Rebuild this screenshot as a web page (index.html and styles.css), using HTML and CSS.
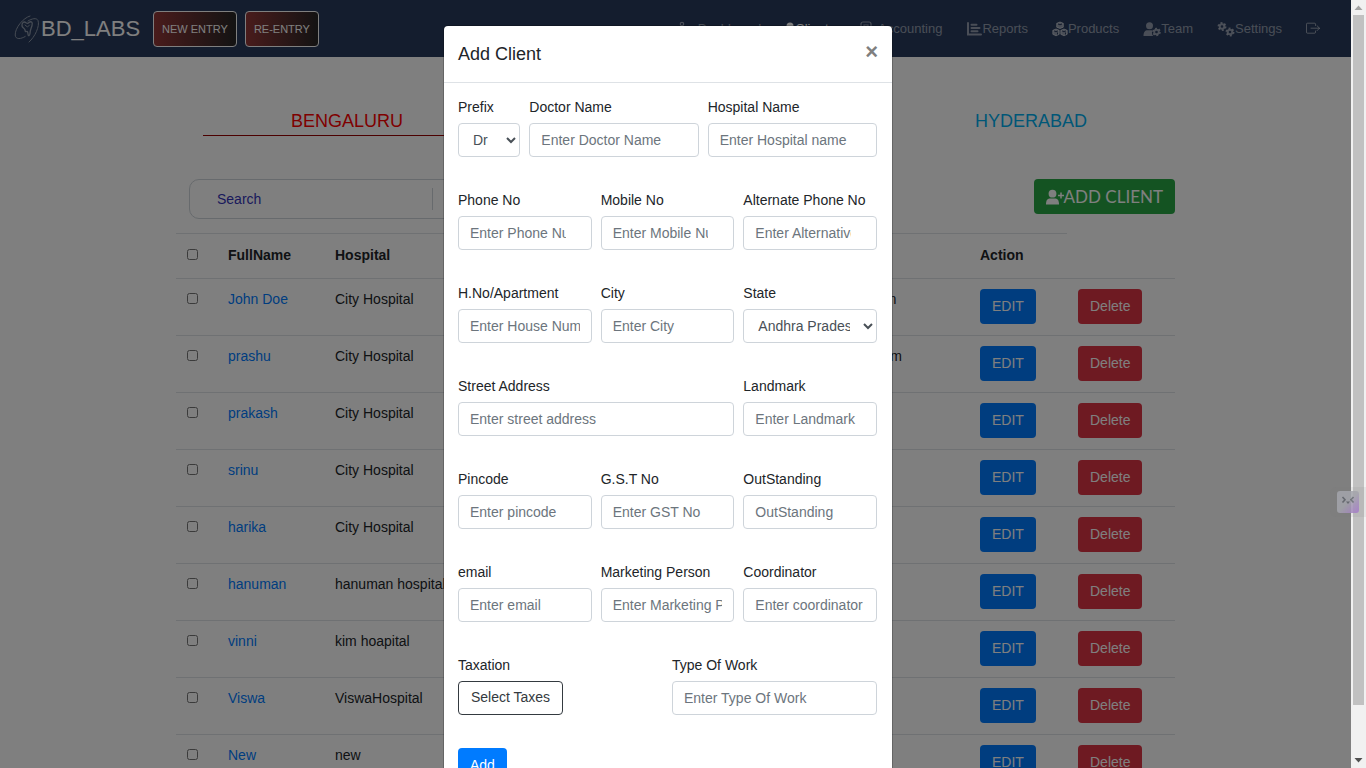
FILE: index.html
```html
<!DOCTYPE html>
<html lang="en">
<head>
<meta charset="utf-8">
<title>BD_LABS - Clients</title>
<link rel="stylesheet" href="styles.css">
</head>
<body>
<div class="screen">
  <div class="page">
    <nav class="navbar">
      <a class="brand" href="#">
        <svg class="brand-logo" viewBox="0 0 26 30" fill="none" stroke="#8c97a8" stroke-linecap="round" stroke-linejoin="round"><path d="M16 2C9 4 1 14 1.200 21c.3 5 6 4 10 1.500M15 28C21 23 26 12 24 6.500 22.500 3.500 18 4.500 14 7" stroke-width="1"/><path d="M8 12c-.5-3.500 2-5 4-3.200 1.200.8 2 .8 3-.3 2-1.600 4-.5 3 3-.6 2.500-1.800 4-2 8-.3 2.500-1.800 3-2 .5-.3-2.500-.7-3-1.500-2.500-1 .5-1.200 0-1.500-1.500-.5-2-2.600-2-3-4Z" stroke-width="1.300"/><path d="M11 11l2.500 2 2-2" stroke-width="1"/></svg>
        <span>BD_LABS</span>
      </a>
      <button class="entry-btn" type="button">NEW ENTRY</button>
      <button class="entry-btn" type="button">RE-ENTRY</button>
      <div class="nav-links">
        <a class="nav-link spaced" href="#"><svg class="ic" viewBox="0 0 16 16" fill="none" stroke="currentColor" stroke-width="1.200"><circle cx="3" cy="3" r="1.700"/><path d="M3 5v8h10M3 7h10"/></svg><span>Dashboard</span></a>
        <a class="nav-link active" href="#"><svg class="ic slim" viewBox="0 0 10 16" fill="currentColor"><circle cx="5" cy="5" r="3.500"/><path d="M0 15c0-4 2-5.500 5-5.500s5 1.500 5 5.500Z"/></svg><span>Clients</span></a>
        <a class="nav-link spaced" href="#"><svg class="ic" viewBox="0 0 16 16" fill="none" stroke="currentColor" stroke-width="1.200"><rect x="2" y="1" width="10" height="13" rx="2"/><path d="M5 4h4v3.500H5zM4 10.500h6"/></svg><span>Accounting</span></a>
        <a class="nav-link" href="#"><svg class="ic" viewBox="0 0 16 16" fill="none" stroke="currentColor" stroke-width="2" stroke-linecap="round"><path d="M2 2v11.500h13M5.500 3.800h5M5.500 7h8M5.500 10.200h6"/></svg><span>Reports</span></a>
        <a class="nav-link" href="#"><svg class="ic" viewBox="0 0 16 16" fill="currentColor" stroke="currentColor" stroke-width="1" stroke-linejoin="round"><path d="M8 1 11.300 2.300v3.900L8 7.500 4.700 6.200V2.300ZM4 8l3.200 1.300v4L4 14.800.8 13.300v-4ZM12 8l3.200 1.300v4L12 14.800l-3.200-1.500v-4Z"/><path d="M6 3 8 3.800 10 3M2.200 10 4 10.800 5.800 10M10.200 10l1.800.8 1.800-.8M5.500 11.500v2M13.500 11.500v2" fill="none" stroke="#283a5c" stroke-width="1"/></svg><span>Products</span></a>
        <a class="nav-link" href="#"><svg class="ic wide" viewBox="0 0 17 16" fill="currentColor"><circle cx="6" cy="4.800" r="3.500"/><path d="M0 15c0-4 1.500-5.800 4-5.800h3.500c1 0 1.300.3 1.300.8-.8 2-.2 4 1 5Z"/><circle cx="13" cy="11" r="2.300" fill="none" stroke="currentColor" stroke-width="1.900"/><circle cx="13" cy="11" r="3.700" fill="none" stroke="currentColor" stroke-width="1.200" stroke-dasharray="1.940"/></svg><span>Team</span></a>
        <a class="nav-link" href="#"><svg class="ic wide" viewBox="0 0 17 16" fill="none" stroke="currentColor"><circle cx="4.500" cy="5.500" r="2.300" stroke-width="2"/><circle cx="4.500" cy="5.500" r="3.800" stroke-width="1.400" stroke-dasharray="1.990"/><circle cx="12.500" cy="11" r="2.300" stroke-width="2"/><circle cx="12.500" cy="11" r="3.800" stroke-width="1.400" stroke-dasharray="1.990"/></svg><span>Settings</span></a>
        <a class="nav-link" href="#" aria-label="Log out"><svg class="ic out" viewBox="0 0 14 14" fill="none" stroke="currentColor" stroke-linecap="round" stroke-linejoin="round"><path d="M9.500 3.500V2.200c0-.7-.3-1-1-1h-7c-.7 0-1 .3-1 1v8c0 .7.300 1 1 1h7c.7 0 1-.3 1-1V9M5 6.200h8.500M11 3.700l2.500 2.500L11 8.700"/></svg></a>
      </div>
    </nav>

    <main class="container">
      <div class="tabs">
        <a class="tab selected" href="#">BENGALURU</a>
        <a class="tab" href="#">HYDERABAD</a>
      </div>
      <div class="toolbar">
        <div class="search">
          <input class="search-input" type="text" placeholder="Search" aria-label="Search">
        </div>
        <button class="add-client" type="button"><svg class="plus-ic" viewBox="0 0 18 16" fill="currentColor"><circle cx="6.500" cy="4.700" r="3.900"/><path d="M0 15.500C0 11 1.500 9.500 4.500 9.500h4c3 0 4.500 1.500 4.500 6Z"/><path d="M12 6.500h6M15 3.500v6" stroke="currentColor" stroke-width="1.500"/></svg><span>ADD CLIENT</span></button>
      </div>

      <table class="clients">
        <colgroup><col class="c-check"><col class="c-name"><col class="c-hospital"><col class="c-email"><col class="c-edit"><col class="c-delete"></colgroup>
        <thead>
          <tr><th><input class="tick" type="checkbox" aria-label="Select all"></th><th>FullName</th><th>Hospital</th><th></th><th>Action</th></tr>
        </thead>
        <tbody>
          <tr><td><input class="tick" type="checkbox" aria-label="Select John Doe"></td><td><a href="#">John Doe</a></td><td>City Hospital</td><td>john.k@gmail.com</td><td><button class="btn edit" type="button">EDIT</button></td><td><button class="btn delete" type="button">Delete</button></td></tr>
          <tr><td><input class="tick" type="checkbox" aria-label="Select prashu"></td><td><a href="#">prashu</a></td><td>City Hospital</td><td>prashu@gmail.com</td><td><button class="btn edit" type="button">EDIT</button></td><td><button class="btn delete" type="button">Delete</button></td></tr>
          <tr><td><input class="tick" type="checkbox" aria-label="Select prakash"></td><td><a href="#">prakash</a></td><td>City Hospital</td><td></td><td><button class="btn edit" type="button">EDIT</button></td><td><button class="btn delete" type="button">Delete</button></td></tr>
          <tr><td><input class="tick" type="checkbox" aria-label="Select srinu"></td><td><a href="#">srinu</a></td><td>City Hospital</td><td></td><td><button class="btn edit" type="button">EDIT</button></td><td><button class="btn delete" type="button">Delete</button></td></tr>
          <tr><td><input class="tick" type="checkbox" aria-label="Select harika"></td><td><a href="#">harika</a></td><td>City Hospital</td><td></td><td><button class="btn edit" type="button">EDIT</button></td><td><button class="btn delete" type="button">Delete</button></td></tr>
          <tr><td><input class="tick" type="checkbox" aria-label="Select hanuman"></td><td><a href="#">hanuman</a></td><td>hanuman hospital</td><td></td><td><button class="btn edit" type="button">EDIT</button></td><td><button class="btn delete" type="button">Delete</button></td></tr>
          <tr><td><input class="tick" type="checkbox" aria-label="Select vinni"></td><td><a href="#">vinni</a></td><td>kim hoapital</td><td></td><td><button class="btn edit" type="button">EDIT</button></td><td><button class="btn delete" type="button">Delete</button></td></tr>
          <tr><td><input class="tick" type="checkbox" aria-label="Select Viswa"></td><td><a href="#">Viswa</a></td><td>ViswaHospital</td><td></td><td><button class="btn edit" type="button">EDIT</button></td><td><button class="btn delete" type="button">Delete</button></td></tr>
          <tr><td><input class="tick" type="checkbox" aria-label="Select New"></td><td><a href="#">New</a></td><td>new</td><td></td><td><button class="btn edit" type="button">EDIT</button></td><td><button class="btn delete" type="button">Delete</button></td></tr>
        </tbody>
      </table>
    </main>
  </div>

  <div class="overlay">
    <div class="modal" role="dialog" aria-labelledby="modal-title">
      <div class="modal-header">
        <h5 class="modal-title" id="modal-title">Add Client</h5>
        <button class="close" type="button" aria-label="Close">×</button>
      </div>
      <form class="modal-body">
        <div class="field span-2"><label for="prefix">Prefix</label><select class="control" id="prefix"><option>Dr</option></select></div>
        <div class="field span-5"><label for="doctor">Doctor Name</label><input class="control" id="doctor" type="text" placeholder="Enter Doctor Name"></div>
        <div class="field span-5"><label for="hospital">Hospital Name</label><input class="control" id="hospital" type="text" placeholder="Enter Hospital name"></div>

        <div class="field span-4"><label for="phone">Phone No</label><input class="control spin" id="phone" type="text" placeholder="Enter Phone Number"></div>
        <div class="field span-4"><label for="mobile">Mobile No</label><input class="control spin" id="mobile" type="text" placeholder="Enter Mobile Number"></div>
        <div class="field span-4"><label for="alt-phone">Alternate Phone No</label><input class="control spin" id="alt-phone" type="text" placeholder="Enter Alternative Number"></div>

        <div class="field span-4"><label for="house">H.No/Apartment</label><input class="control" id="house" type="text" placeholder="Enter House Number"></div>
        <div class="field span-4"><label for="city">City</label><input class="control" id="city" type="text" placeholder="Enter City"></div>
        <div class="field span-4"><label for="state">State</label><select class="control" id="state"><option>Andhra Pradesh</option></select></div>

        <div class="field span-8"><label for="street">Street Address</label><input class="control" id="street" type="text" placeholder="Enter street address"></div>
        <div class="field span-4"><label for="landmark">Landmark</label><input class="control" id="landmark" type="text" placeholder="Enter Landmark"></div>

        <div class="field span-4"><label for="pincode">Pincode</label><input class="control" id="pincode" type="text" placeholder="Enter pincode"></div>
        <div class="field span-4"><label for="gst">G.S.T No</label><input class="control" id="gst" type="text" placeholder="Enter GST No"></div>
        <div class="field span-4"><label for="outstanding">OutStanding</label><input class="control" id="outstanding" type="text" placeholder="OutStanding"></div>

        <div class="field span-4"><label for="email">email</label><input class="control" id="email" type="email" placeholder="Enter email"></div>
        <div class="field span-4"><label for="marketing">Marketing Person</label><input class="control" id="marketing" type="text" placeholder="Enter Marketing Person"></div>
        <div class="field span-4"><label for="coordinator">Coordinator</label><input class="control" id="coordinator" type="text" placeholder="Enter coordinator"></div>

        <div class="field span-6"><label for="taxes">Taxation</label><button class="btn outline" id="taxes" type="button">Select Taxes</button></div>
        <div class="field span-6"><label for="work">Type Of Work</label><input class="control" id="work" type="text" placeholder="Enter Type Of Work"></div>

        <div class="actions"><button class="btn edit" type="submit">Add</button></div>
      </form>
    </div>
  </div>
</div>

<div class="scrollbar" aria-hidden="true">
  <svg class="arrow" viewBox="0 0 15 15" fill="#a3a3a3"><path d="M7.500 5.500 11.500 10h-8Z"/></svg>
  <div class="track"><div class="thumb"></div></div>
  <svg class="arrow" viewBox="0 0 15 15" fill="#505050"><path d="M7.500 9.500 3.500 5h8Z"/></svg>
</div>

<div class="widget" aria-hidden="true">
  <svg class="widget-face" viewBox="0 0 22 22"><defs><linearGradient id="face" x1="0" y1="0" x2="1" y2="1"><stop offset=".5" stop-color="#a4a5ac"/><stop offset="1" stop-color="#a678cc"/></linearGradient></defs><rect width="22" height="22" rx="3" fill="url(#face)"/><path d="M5.500 6 8 8.700 5.500 11.500M16.500 6 14 8.700l2.500 2.800" fill="none" stroke="#62666e" stroke-width="1.600"/><path d="M9 10.500h4L11 13Z" fill="#62666e"/></svg>
</div>
</body>
</html>
```
FILE: styles.css
```css
* { box-sizing: border-box; }

body {
  margin: 0;
  height: 100vh;
  display: flex;
  position: relative;
  overflow: hidden;
  font-family: "Liberation Sans", Arial, sans-serif;
  font-size: 14px;
  line-height: 20px;
  color: #212529;
  background: #fff;
}

button, input, select { font: inherit; }
button { cursor: pointer; }
a { color: #007bff; text-decoration: none; }

.screen { flex: 1; position: relative; overflow: hidden; }

/* top bar */
.navbar {
  display: flex;
  align-items: center;
  height: 57px;
  padding: 0 31px 0 14px;
  background: #283a5c;
}
.brand {
  display: flex;
  align-items: center;
  gap: 1px;
  margin-right: 13px;
  color: #fff;
  font-size: 22px;
}
.brand-logo { width: 26px; height: 30px; }
.entry-btn {
  height: 36px;
  margin-right: 8px;
  padding: 0 8px;
  border: 1px solid #fff;
  border-radius: 4px;
  color: #fff;
  font-size: 11px;
  background: linear-gradient(to right, #933838, #262626);
}
.nav-links { display: flex; gap: 24px; margin-left: auto; }
.nav-link {
  display: flex;
  align-items: center;
  color: rgba(255, 255, 255, .5);
  font-size: 13px;
}
.nav-link.active { color: #fff; }
.spaced { gap: 3px; }
.ic { width: 16px; height: 16px; }
.ic.slim { width: 10px; }
.ic.wide { width: 18px; }
.ic.out { width: 14px; height: 14px; }

/* page content */
.container { max-width: 999px; margin: 0 auto; padding-top: 50px; }
.tabs {
  display: flex;
  justify-content: space-between;
  margin-left: 27px;
}
.tab {
  width: 288px;
  height: 29px;
  border-bottom: 1px solid transparent;
  color: #00aeef;
  font-size: 18px;
  line-height: 28px;
  text-align: center;
}
.tab.selected { color: #f00; border-color: #900; }

.toolbar {
  display: flex;
  justify-content: space-between;
  align-items: flex-start;
  margin: 43px 0 14px 13px;
}
.search {
  display: flex;
  align-items: center;
  width: 480px;
  height: 40px;
  padding-left: 27px;
  border: 1px solid #ced4da;
  border-radius: 10px;
}
.search-input {
  width: 216px;
  height: 22px;
  padding: 0;
  border: 0;
  border-right: 1px solid #ced4da;
  background: none;
}
.search-input::placeholder { color: #3434b8; }
.add-client {
  display: flex;
  align-items: center;
  height: 35px;
  padding: 0 12px;
  border: 0;
  border-radius: 4px;
  color: #fff;
  background: #28a745;
  font-family: Lato, sans-serif;
  font-size: 17px;
  font-weight: 400;
}
.plus-ic { width: 18px; height: 16px; }

.clients { width: 100%; table-layout: fixed; border-collapse: separate; border-spacing: 0; }
.clients th, .clients td {
  padding: 10px 11px 11px;
  border-top: 1px solid #dee2e6;
  text-align: left;
  vertical-align: top;
  white-space: nowrap;
}
.clients th { padding: 11px 11px 13px; }
.c-check { width: 41px; }
.c-name { width: 107px; }
.c-hospital { width: 446px; }
.c-email { width: 199px; }
.c-edit { width: 98px; }
.tick { display: block; width: 11px; height: 11px; margin: 4px 0 0; }

.btn {
  display: block;
  height: 35px;
  padding: 0 11px 2px;
  border: 1px solid transparent;
  border-radius: 4px;
  color: #fff;
}
.btn.edit { background: #007bff; }
.btn.delete { background: #dc3545; }
.btn.outline { height: 34px; padding: 0 12px 2px; border-color: #343a40; color: #343a40; background: #fff; }

/* dialog */
.overlay {
  position: absolute;
  inset: 0;
  padding: 26px 15px 0 0;
  overflow: hidden;
  background: rgba(0, 0, 0, .5);
}
.modal {
  max-width: 448px;
  margin: 0 auto;
  border-radius: 4px;
  background: #fff;
  box-shadow: 0 0 0 1px rgba(0, 0, 0, .2);
}
.modal-header {
  display: flex;
  justify-content: space-between;
  align-items: flex-start;
  height: 57px;
  padding: 14px;
  border-bottom: 1px solid #dee2e6;
}
.modal-title { margin: 0; font-size: 18px; font-weight: 400; line-height: 28px; }
.close {
  padding: 0;
  border: 0;
  color: #7f7f7f;
  background: none;
  font-size: 22px;
  font-weight: 700;
  line-height: 24px;
}
.modal-body {
  display: grid;
  grid-template-columns: repeat(12, 1fr);
  gap: 33px 9px;
  padding: 14px 15px 14px 14px;
}
.field { min-width: 0; }
.field label { display: block; margin-bottom: 6px; white-space: nowrap; }
.span-2 { grid-column: span 2; }
.span-4 { grid-column: span 4; }
.span-5 { grid-column: span 5; }
.span-6 { grid-column: span 6; }
.span-8 { grid-column: span 8; }
.actions { grid-column: span 12; }
.control {
  display: block;
  width: 100%;
  height: 34px;
  padding: 0 11px;
  border: 1px solid #ced4da;
  border-radius: 4px;
  color: #495057;
  background: #fff;
}
select.control { padding: 0 10px; }
.control.spin { padding-right: 25px; }
.control::placeholder { color: #6c757d; }

/* window scroll bar */
.scrollbar { display: flex; flex-direction: column; width: 15px; background: #f1f1f1; }
.arrow { width: 15px; height: 15px; }
.track { flex: 1; padding: 0 2px; }
.thumb { height: 93.500%; background: #c1c1c1; }

/* floating helper */
.widget {
  position: absolute;
  top: 487px;
  right: 0;
  padding: 4px 7px;
  border-radius: 6px 0 0 6px;
  background: rgba(120, 120, 120, .1);
}
.widget-face { display: block; width: 22px; height: 22px; opacity: .85; }
```
